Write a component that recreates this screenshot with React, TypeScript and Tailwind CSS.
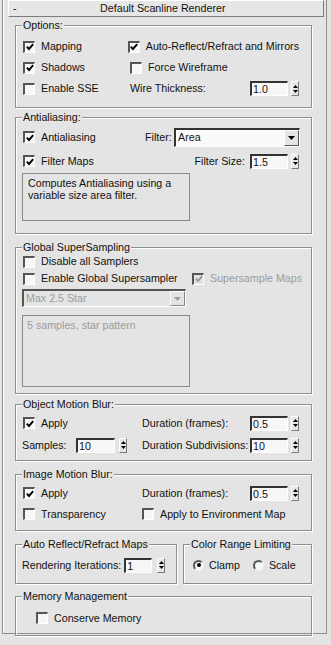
import type { ReactNode } from 'react'

const Check = ({ checked = false, disabled = false }: { checked?: boolean; disabled?: boolean }) => (
  <span
    className={`flex h-[12px] w-[12px] shrink-0 items-center justify-center border-t-2 border-l-2 border-r border-b border-t-[#555] border-l-[#555] border-r-white border-b-white ${
      disabled ? 'bg-[#e2e2e2]' : 'bg-[#f7f7f7]'
    }`}
  >
    {checked && (
      <svg width="8" height="8" viewBox="0 0 8 8">
        <path d="M0.8 3.6 L3 6 L7.2 1.2" fill="none" stroke={disabled ? '#9c9c9c' : '#000'} strokeWidth="1.9" />
      </svg>
    )}
  </span>
)

const Radio = ({ on = false }: { on?: boolean }) => (
  <span className="flex h-[11px] w-[11px] shrink-0 items-center justify-center rounded-full border-2 border-t-[#555] border-l-[#555] border-r-[#f4f4f4] border-b-[#f4f4f4] bg-[#f7f7f7]">
    {on && <span className="h-[4px] w-[4px] rounded-full bg-black" />}
  </span>
)

const Arrows = () => (
  <div className="flex h-[15px] w-[8px] shrink-0 flex-col items-center justify-center gap-[2px] border border-t-white border-l-white border-r-[#7a7a7a] border-b-[#7a7a7a] bg-[#e6e6e6]">
    <svg width="5" height="3" viewBox="0 0 5 3">
      <path d="M0 3 L2.5 0 L5 3Z" fill="#000" />
    </svg>
    <svg width="5" height="3" viewBox="0 0 5 3">
      <path d="M0 0 L2.5 3 L5 0Z" fill="#000" />
    </svg>
  </div>
)

const Spinner = ({ value, boxClass = 'w-[38px]', gapClass = 'gap-[3px]' }: { value: string; boxClass?: string; gapClass?: string }) => (
  <div className={`flex items-center ${gapClass}`}>
    <div
      className={`h-[15px] ${boxClass} border-t-2 border-l-2 border-r border-b border-t-[#333] border-l-[#333] border-r-white border-b-white bg-[#f7f7f7] pl-[1px] leading-[12px]`}
    >
      {value}
    </div>
    <Arrows />
  </div>
)

const Group = ({ title, className, children }: { title: string; className: string; children?: ReactNode }) => (
  <div className={`border border-[#8e8e8e] shadow-[inset_1px_1px_0_#fff,1px_1px_0_#fff] ${className}`}>
    <div className="-mt-[7px] ml-[6px] h-[13px] w-fit bg-[#e4e4e4] px-[1px] leading-[13px] whitespace-nowrap">{title}</div>
    {children}
  </div>
)

const Labeled = ({ children, checked, disabled }: { children: ReactNode; checked?: boolean; disabled?: boolean }) => (
  <div className="flex items-center gap-[6px] whitespace-nowrap">
    <Check checked={checked} disabled={disabled} />
    <span className={disabled ? 'text-[#9c9c9c]' : ''}>{children}</span>
  </div>
)

export default function App() {
  return (
    <div className="h-[645px] w-[331px] overflow-hidden bg-[#e4e4e4] font-['Liberation_Sans',Arial,sans-serif] text-[10.7px] leading-[13px] text-[#111]">
      <div className="ml-[2px] mt-[10px] h-[634px] w-[325px] border-x border-b border-[#8e8e8e] shadow-[inset_1px_0_0_#fff]">
        {/* rollout header */}
        <div className="relative -mt-[10px] ml-[5px] flex h-[17px] w-[316px] items-center border border-t-white border-l-white border-r-[#7c7c7c] border-b-[#7c7c7c] bg-[#e6e6e6]">
          <span className="pl-[4px]">-</span>
          <span className="flex-1 pr-[14px] text-center">Default Scanline Renderer</span>
        </div>

        {/* Options */}
        <Group title="Options:" className="ml-[12px] mt-[8px] h-[83px] w-[297px]">
          <div className="mt-[4px]">
            <div className="flex h-[21px] items-center pl-[7px] pr-[12px]">
              <div className="w-[107px]">
                <Labeled checked>Mapping</Labeled>
              </div>
              <Labeled checked>Auto-Reflect/Refract and Mirrors</Labeled>
            </div>
            <div className="flex h-[21px] items-center pl-[7px] pr-[12px]">
              <div className="w-[107px]">
                <Labeled checked>Shadows</Labeled>
              </div>
              <Labeled>Force Wireframe</Labeled>
            </div>
            <div className="flex h-[21px] items-center pl-[7px] pr-[12px]">
              <div className="w-[107px]">
                <Labeled>Enable SSE</Labeled>
              </div>
              <span className="whitespace-nowrap">Wire Thickness:</span>
              <div className="ml-auto">
                <Spinner value="1.0" />
              </div>
            </div>
          </div>
        </Group>

        {/* Antialiasing */}
        <Group title="Antialiasing:" className="ml-[12px] mt-[9px] h-[117px] w-[297px]">
          <div className="mt-[2px] flex h-[22px] items-center pl-[7px] pr-[11px]">
            <div className="w-[122px]">
              <Labeled checked>Antialiasing</Labeled>
            </div>
            <span>Filter:</span>
            <div className="ml-auto flex h-[19px] w-[126px] items-center border-t-2 border-l-2 border-r border-b border-t-[#333] border-l-[#333] border-r-white border-b-white bg-[#fafafa]">
              <span className="flex-1 pl-[2px]">Area</span>
              <span className="flex h-full w-[15px] items-center justify-center border border-t-white border-l-white border-r-[#555] border-b-[#555] bg-[#e4e4e4]">
                <svg width="7" height="4" viewBox="0 0 7 4">
                  <path d="M0 0H7L3.5 4Z" fill="#000" />
                </svg>
              </span>
            </div>
          </div>
          <div className="mt-[2px] flex h-[22px] items-center pl-[7px] pr-[12px]">
            <Labeled checked>Filter Maps</Labeled>
            <span className="ml-auto mr-[5px] whitespace-nowrap">Filter Size:</span>
            <Spinner value="1.5" />
          </div>
          <div className="ml-[6px] mt-[1px] h-[48px] w-[168px] border border-[#8a8a8a] px-[5px] pt-[3px] leading-[12px]">
            Computes Antialiasing using a variable size area filter.
          </div>
        </Group>

        {/* Global SuperSampling */}
        <Group title="Global SuperSampling" className="ml-[12px] mt-[13px] h-[147px] w-[297px]">
          <div className="flex h-[15px] items-center pl-[7px]">
            <Labeled>Disable all Samplers</Labeled>
          </div>
          <div className="mt-[2px] flex h-[15px] items-center pl-[7px]">
            <div className="w-[169px]">
              <Labeled>Enable Global Supersampler</Labeled>
            </div>
            <Labeled checked disabled>
              Supersample Maps
            </Labeled>
          </div>
          <div className="ml-[6px] mt-[3px] flex h-[18px] w-[164px] items-center border-t-2 border-l-2 border-r border-b border-t-[#555] border-l-[#555] border-r-white border-b-white bg-[#e4e4e4] text-[#9c9c9c]">
            <span className="flex-1 pl-[2px]">Max 2.5 Star</span>
            <span className="flex h-full w-[15px] items-center justify-center border border-t-white border-l-white border-r-[#888] border-b-[#888] bg-[#e4e4e4]">
              <svg width="7" height="4" viewBox="0 0 7 4">
                <path d="M0 0H7L3.5 4Z" fill="#9c9c9c" />
              </svg>
            </span>
          </div>
          <div className="ml-[6px] mt-[8px] h-[72px] w-[168px] border border-[#8a8a8a] px-[4px] pt-[3px] text-[#9c9c9c]">
            5 samples, star pattern
          </div>
        </Group>

        {/* Object Motion Blur */}
        <Group title="Object Motion Blur:" className="ml-[12px] mt-[10px] h-[57px] w-[297px]">
          <div className="mt-[4px] flex h-[16px] items-center pl-[7px] pr-[12px]">
            <div className="w-[119px]">
              <Labeled checked>Apply</Labeled>
            </div>
            <span className="whitespace-nowrap">Duration (frames):</span>
            <div className="ml-auto">
              <Spinner value="0.5" />
            </div>
          </div>
          <div className="mt-[6px] flex h-[16px] items-center pl-[6px] pr-[12px]">
            <div className="flex w-[120px] items-center">
              <span className="w-[54px]">Samples:</span>
              <Spinner value="10" boxClass="w-[39px]" gapClass="gap-[4px]" />
            </div>
            <span className="whitespace-nowrap">Duration Subdivisions:</span>
            <div className="ml-auto">
              <Spinner value="10" />
            </div>
          </div>
        </Group>

        {/* Image Motion Blur */}
        <Group title="Image Motion Blur:" className="ml-[12px] mt-[13px] h-[57px] w-[297px]">
          <div className="mt-[4px] flex h-[16px] items-center pl-[7px] pr-[12px]">
            <div className="w-[119px]">
              <Labeled checked>Apply</Labeled>
            </div>
            <span className="whitespace-nowrap">Duration (frames):</span>
            <div className="ml-auto">
              <Spinner value="0.5" />
            </div>
          </div>
          <div className="mt-[5px] flex h-[16px] items-center pl-[7px] pr-[12px]">
            <div className="w-[119px]">
              <Labeled>Transparency</Labeled>
            </div>
            <Labeled>Apply to Environment Map</Labeled>
          </div>
        </Group>

        {/* Auto reflect + Color range */}
        <div className="ml-[12px] mt-[13px] flex w-[297px] gap-[6px]">
          <Group title="Auto Reflect/Refract Maps" className="h-[40px] w-[162px]">
            <div className="mt-[6px] flex h-[16px] items-center pl-[6px]">
              <span className="whitespace-nowrap">Rendering Iterations:</span>
              <div className="ml-[3px]">
                <Spinner value="1" boxClass="w-[28px]" gapClass="gap-[5px]" />
              </div>
            </div>
          </Group>
          <Group title="Color Range Limiting" className="h-[40px] w-[129px]">
            <div className="mt-[6px] flex h-[16px] items-center pl-[9px]">
              <Radio on />
              <span className="ml-[5px]">Clamp</span>
              <div className="ml-[13px]">
                <Radio />
              </div>
              <span className="ml-[5px]">Scale</span>
            </div>
          </Group>
        </div>

        {/* Memory Management */}
        <Group title="Memory Management" className="ml-[12px] mt-[12px] h-[40px] w-[297px]">
          <div className="mt-[7px] flex h-[16px] items-center pl-[20px]">
            <Labeled>Conserve Memory</Labeled>
          </div>
        </Group>
      </div>
    </div>
  )
}
